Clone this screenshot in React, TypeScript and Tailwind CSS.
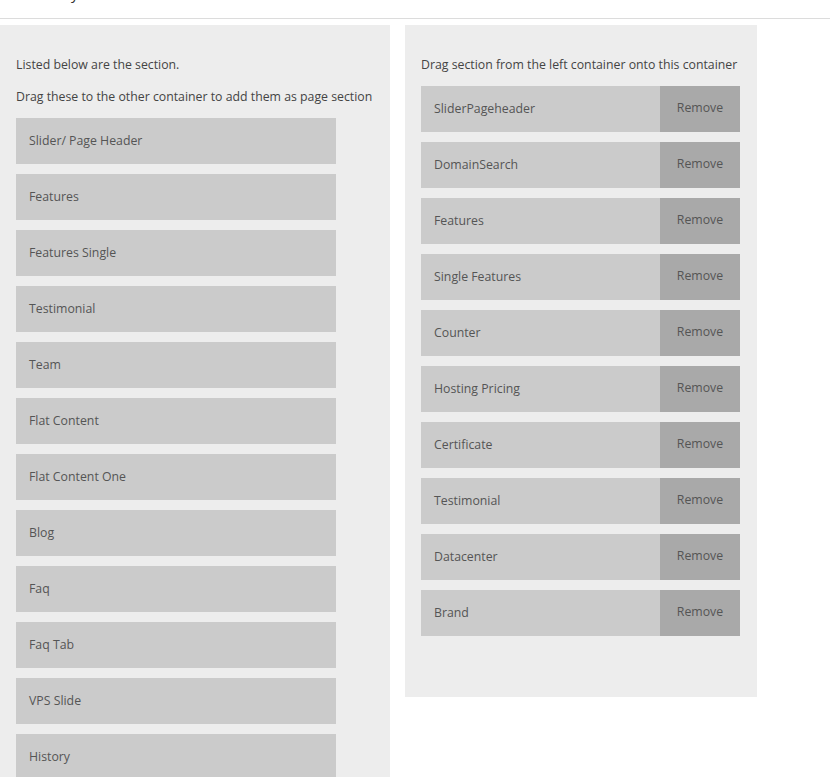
const available = [
  'Slider/ Page Header',
  'Features',
  'Features Single',
  'Testimonial',
  'Team',
  'Flat Content',
  'Flat Content One',
  'Blog',
  'Faq',
  'Faq Tab',
  'VPS Slide',
  'History',
];

const selected = [
  'SliderPageheader',
  'DomainSearch',
  'Features',
  'Single Features',
  'Counter',
  'Hosting Pricing',
  'Certificate',
  'Testimonial',
  'Datacenter',
  'Brand',
];

export default function App() {
  return (
    <div className="min-h-screen bg-white text-[12.3px] text-[#444] font-['Open_Sans',sans-serif]">
      {/* page title, scrolled mostly out of view */}
      <div className="h-[19px] overflow-hidden border-b border-[#dcdcdc]">
        <h1 className="-mt-[17px] pl-[12px] text-[15px] leading-[20px] text-[#333]">Assembly</h1>
      </div>

      <div className="mt-[6px] flex items-start gap-[15px]">
        {/* left container */}
        <div className="w-[390px] bg-[#ededed] px-[16px] pt-[30px] pb-[16px]">
          <p className="mb-[12px] whitespace-nowrap leading-[20px]">Listed below are the section.</p>
          <p className="mb-[11px] whitespace-nowrap leading-[20px]">
            Drag these to the other container to add them as page section
          </p>
          <div className="flex flex-col gap-[10px]">
            {available.map((name) => (
              <div
                key={name}
                className="flex h-[46px] w-[320px] items-center bg-[#cbcbcb] px-[13px] text-[#555]"
              >
                {name}
              </div>
            ))}
          </div>
        </div>

        {/* right container */}
        <div className="h-[672px] w-[352px] bg-[#ededed] px-[16px] pt-[30px]">
          <p className="mb-[11px] whitespace-nowrap leading-[20px]">
            Drag section from the left container onto this container
          </p>
          <div className="flex flex-col gap-[10px]">
            {selected.map((name) => (
              <div key={name} className="flex h-[46px] w-[319px] bg-[#cbcbcb] text-[#555]">
                <span className="flex flex-1 items-center px-[13px]">{name}</span>
                <button className="flex w-[80px] items-center justify-center bg-[#a9a9a9] pb-[2px] text-[#555]">
                  Remove
                </button>
              </div>
            ))}
          </div>
        </div>
      </div>
    </div>
  );
}
